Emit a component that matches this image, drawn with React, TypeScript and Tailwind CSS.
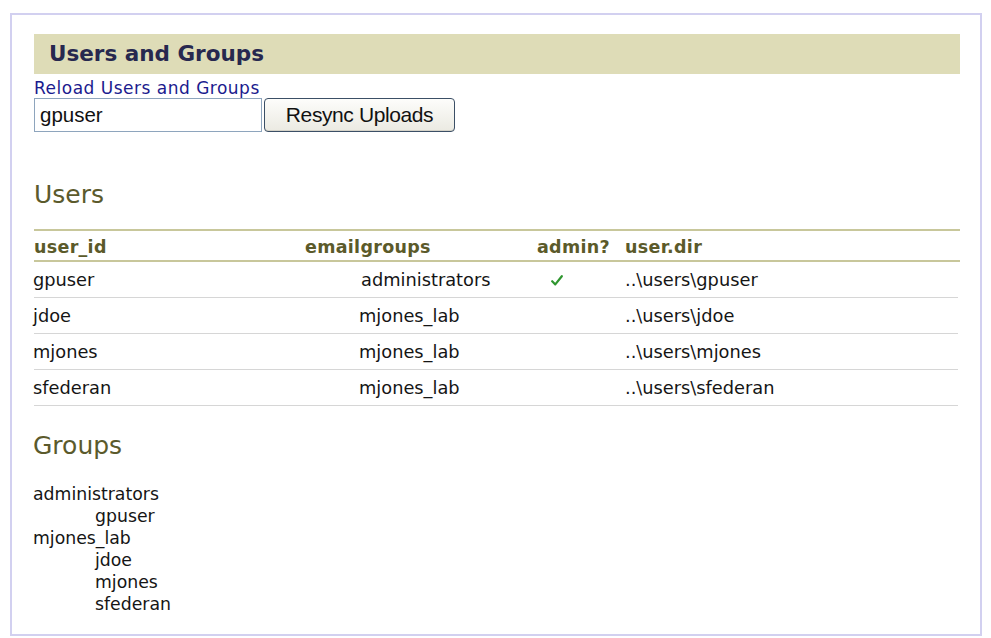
import React from "react";

const users = [
  { id: "gpuser", group: "administrators", admin: true, dir: "..\\users\\gpuser", pl: "pl-[56px]" },
  { id: "jdoe", group: "mjones_lab", admin: false, dir: "..\\users\\jdoe", pl: "pl-[54px]" },
  { id: "mjones", group: "mjones_lab", admin: false, dir: "..\\users\\mjones", pl: "pl-[54px]" },
  { id: "sfederan", group: "mjones_lab", admin: false, dir: "..\\users\\sfederan", pl: "pl-[54px]" },
];

function Check() {
  return (
    <svg width="12" height="11" viewBox="0 0 12 11" className="ml-[14px]">
      <path d="M1.2 6.2 L4.3 9.4 L10.8 1.2" fill="none" stroke="#2f962f" strokeWidth="2.2" strokeLinecap="round" strokeLinejoin="round" />
    </svg>
  );
}

export default function App() {
  return (
    <div className="w-[991px] h-[638px] bg-white overflow-hidden pt-[13px] pl-[10px] font-['DejaVu_Sans',Verdana,sans-serif]">
      <div className="w-[972px] h-[623px] border-2 border-[#d2d0f0] pl-[22px] pr-[20px] pt-[19px]">
        <div className="h-[40px] bg-[#dedcb7] flex items-center pl-[15px]">
          <h1 className="text-[21.5px] font-bold text-[#27284f] leading-none">Users and Groups</h1>
        </div>
        <div className="mt-[4px] h-[20px] leading-[20px] text-[17px] tracking-[0.5px] text-[#1b1b8e]">
          <a href="#" className="no-underline">Reload Users and Groups</a>
        </div>
        <div className="flex gap-[2px] h-[34px]">
          <div className="w-[228px] h-[34px] border border-[#8ea5bd] bg-white flex items-center pl-[5px] font-['Liberation_Sans',Arial,sans-serif] text-[20.5px] text-[#111]">
            gpuser
          </div>
          <button className="w-[191px] h-[34px] rounded-[4px] border border-[#3b4f66] bg-gradient-to-b from-[#fdfdfb] to-[#ebeae2] font-['Liberation_Sans',Arial,sans-serif] text-[21px] tracking-[-0.4px] text-[#111] shadow-[inset_0_-1px_0_#d4d2c8]">
            Resync Uploads
          </button>
        </div>

        <h2 className="mt-[48px] h-[30px] leading-[30px] text-[25px] text-[#5b5a2c]">Users</h2>

        <div className="mt-[19px] border-t-2 border-[#c8c79b]">
          <div className="grid grid-cols-[271px_232px_88px_1fr] h-[31px] pt-[3px] items-center border-b-2 border-[#c8c79b] text-[17.5px] font-bold text-[#5b5a2a] tracking-[0.3px]">
            <div>user_id</div>
            <div>emailgroups</div>
            <div>admin?</div>
            <div>user.dir</div>
          </div>
          {users.map((u) => (
            <div
              key={u.id}
              className="grid grid-cols-[271px_232px_88px_1fr] h-[36px] pt-[1px] items-center border-b border-[#d6d6d6] mr-[2px] text-[17.8px] text-[#151515]"
            >
              <div className="-ml-[1px]">{u.id}</div>
              <div className={u.pl}>{u.group}</div>
              <div className="flex items-center">{u.admin ? <Check /> : null}</div>
              <div>{u.dir}</div>
            </div>
          ))}
        </div>

        <h2 className="mt-[25px] h-[30px] leading-[30px] text-[25px] text-[#5b5a2c] -ml-[1px]">Groups</h2>

        <div className="mt-[22px] text-[17.3px] leading-[22px] text-[#151515] -ml-[1px]">
          <div>administrators</div>
          <div className="pl-[62px]">gpuser</div>
          <div>mjones_lab</div>
          <div className="pl-[62px]">jdoe</div>
          <div className="pl-[62px]">mjones</div>
          <div className="pl-[62px]">sfederan</div>
        </div>
      </div>
    </div>
  );
}
